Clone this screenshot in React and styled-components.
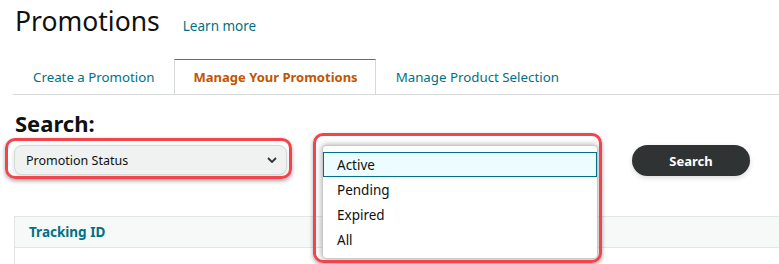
import styled, { createGlobalStyle } from "styled-components";

const Global = createGlobalStyle`
  body {
    margin: 0;
    background: #fff;
    font-family: "Noto Sans", "Open Sans", Arial, sans-serif;
    color: #0f1111;
  }
`;

const Page = styled.div`
  width: 779px;
  height: 264px;
  overflow: hidden;
  padding-left: 14px;
  box-sizing: border-box;
`;

const TitleRow = styled.div`
  display: flex;
  align-items: baseline;
  gap: 23px;
  padding: 3px 0 0 1px;
  height: 44px;
  box-sizing: border-box;
`;

const Title = styled.h1`
  margin: 0;
  font-size: 26.5px;
  font-weight: 400;
  line-height: 36px;
`;

const LearnMore = styled.a`
  color: #007185;
  font-size: 13.5px;
  text-decoration: none;
`;

const Tabs = styled.div`
  display: flex;
  margin: 15px 0 0 -1px;
  border-bottom: 1px solid #d5d9d9;
`;

const Tab = styled.div`
  height: 34px;
  padding: ${(p) => (p.$active ? "0 17px 0 19px" : "0 18px 0 19px")};
  display: flex;
  align-items: center;
  font-size: ${(p) => (p.$active ? "13px" : "13.3px")};
  font-weight: ${(p) => (p.$active ? 700 : 400)};
  color: ${(p) => (p.$active ? "#c45500" : "#007185")};
  border: 1px solid ${(p) => (p.$active ? "#d5d9d9" : "transparent")};
  border-top-color: ${(p) => (p.$active ? "#c45500" : "transparent")};
  border-bottom: none;
  background: ${(p) => (p.$active ? "#fff" : "transparent")};
  margin-bottom: ${(p) => (p.$active ? "-1px" : "0")};
`;

const Heading = styled.h2`
  margin: 12px 0 0 1px;
  font-size: 22px;
  font-weight: 700;
  line-height: 32px;
`;

const Controls = styled.div`
  display: flex;
  align-items: flex-start;
  margin-top: 6px;
`;

const Highlight = styled.div`
  position: relative;
  &::after {
    content: "";
    position: absolute;
    top: ${(p) => p.$t}px;
    left: ${(p) => p.$l}px;
    right: ${(p) => p.$r}px;
    bottom: ${(p) => p.$b}px;
    border: 3px solid #f2454b;
    border-radius: 10px;
    box-shadow: 0 2px 4px rgba(0, 0, 0, 0.35);
    pointer-events: none;
  }
`;

const Select = styled.div`
  width: 273px;
  height: 30px;
  box-sizing: border-box;
  padding: 0 9px 0 11px;
  display: flex;
  align-items: center;
  justify-content: space-between;
  background: #f0f2f2;
  border: 1px solid #d5d9d9;
  border-radius: 8px;
  box-shadow: 0 2px 5px rgba(15, 17, 17, 0.15);
  font-size: 12.5px;
`;

const ListAnchor = styled.div`
  position: relative;
  width: 276px;
  height: 30px;
  margin-left: 35px;
`;

const ListBox = styled(Highlight)`
  position: absolute;
  top: 0;
  left: 0;
  width: 276px;
  box-sizing: border-box;
  padding: 6px 0 6px;
  background: #fff;
  border: 1px solid #c8c8c8;
  border-radius: 4px;
  box-shadow: 0 0 6px rgba(0, 0, 0, 0.35);
  z-index: 2;
`;

const Option = styled.div`
  height: 25px;
  box-sizing: border-box;
  padding: 1px 0 0 13px;
  display: flex;
  align-items: center;
  font-size: 13.5px;
  background: ${(p) => (p.$selected ? "#edfdff" : "transparent")};
  border: 1px solid ${(p) => (p.$selected ? "#007185" : "transparent")};
`;

const SearchButton = styled.button`
  margin-left: 34px;
  width: 118px;
  height: 31px;
  border: none;
  border-radius: 16px;
  background: #303333;
  color: #fff;
  font-family: inherit;
  font-size: 13px;
  font-weight: 700;
  box-shadow: 0 2px 5px rgba(15, 17, 17, 0.15);
`;

const Table = styled.div`
  margin-top: 40px;
  border-left: 1px solid #e3e6e6;
  border-top: 1px solid #e3e6e6;
`;

const HeaderRow = styled.div`
  height: 30px;
  display: flex;
  align-items: center;
  padding-left: 14px;
  background: #f7f8f8;
  border-bottom: 1px solid #e3e6e6;
`;

const HeaderCell = styled.span`
  color: #007185;
  font-size: 13.5px;
  font-weight: 700;
`;

const Body = styled.div`
  height: 20px;
`;

function Chevron() {
  return (
    <svg width="10" height="6" viewBox="0 0 10 6">
      <path d="M1 1l4 4 4-4" fill="none" stroke="#333" strokeWidth="1.8" />
    </svg>
  );
}

const statuses = ["Active", "Pending", "Expired", "All"];

export default function App() {
  return (
    <Page>
      <Global />
      <TitleRow>
        <Title>Promotions</Title>
        <LearnMore href="#">Learn more</LearnMore>
      </TitleRow>
      <Tabs>
        <Tab>Create a Promotion</Tab>
        <Tab $active>Manage Your Promotions</Tab>
        <Tab>Manage Product Selection</Tab>
      </Tabs>
      <Heading>Search:</Heading>
      <Controls>
        <Highlight $t={-7} $l={-9} $r={-5} $b={-4}>
          <Select>
            Promotion Status
            <Chevron />
          </Select>
        </Highlight>
        <ListAnchor>
          <ListBox $t={-13} $l={-10} $r={-5} $b={-5}>
            {statuses.map((s, i) => (
              <Option key={s} $selected={i === 0}>
                {s}
              </Option>
            ))}
          </ListBox>
        </ListAnchor>
        <SearchButton>Search</SearchButton>
      </Controls>
      <Table>
        <HeaderRow>
          <HeaderCell>Tracking ID</HeaderCell>
        </HeaderRow>
        <Body />
      </Table>
    </Page>
  );
}
